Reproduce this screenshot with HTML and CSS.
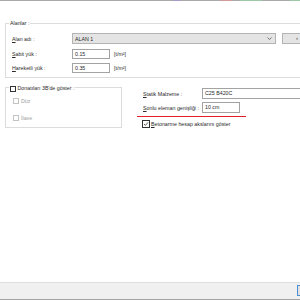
FILE: index.html
```html
<!DOCTYPE html>
<html lang="tr">
<head>
<meta charset="utf-8">
<link rel="stylesheet" href="styles.css">
</head>
<body>
<div class="window">
  <div class="topline">
    <span class="seg gray w173"></span><span class="seg purple w8"></span><span class="seg gray w39"></span><span class="seg red w12"></span><span class="seg gray w8"></span><span class="seg green w22"></span><span class="seg gray w28"></span><span class="seg green w10"></span>
  </div>
  <div class="content">
    <div class="group g1">
      <div class="group-title">Alanlar :</div>
      <div class="row r1">
        <span class="lbl"><u>A</u>lan adı :</span>
        <div class="combo"><span class="combo-text">ALAN 1</span>
          <svg class="chev" width="5" height="3" viewBox="0 0 5 3"><path d="M0.5 0.5 L2.5 2.5 L4.5 0.5" fill="none" stroke="#555" stroke-width="0.8"/></svg>
        </div>
        <div class="sidebtn">‹</div>
      </div>
      <div class="row r2">
        <span class="lbl"><u>S</u>abit yük :</span>
        <div class="input short">0.15</div>
        <span class="unit">[t/m²]</span>
      </div>
      <div class="row r3">
        <span class="lbl"><u>H</u>areketli yük :</span>
        <div class="input short">0.35</div>
        <span class="unit">[t/m²]</span>
      </div>
    </div>
    <div class="lower">
      <div class="group g2">
        <div class="group-title check-title"><span class="cb"></span>Donatıları 3B'de göster :</div>
        <div class="opt first"><span class="cb dis"></span>Düz</div>
        <div class="opt second"><span class="cb dis"></span>İlave</div>
      </div>
      <div class="right">
        <div class="row rs">
          <span class="lbl lbl2"><u>S</u>tatik Malzeme :</span>
          <div class="input wide">C25 B420C</div>
        </div>
        <div class="row rn">
          <span class="lbl lbl2"><u>S</u>onlu eleman genişliği :</span>
          <div class="input short">10 cm</div>
          <span class="redline"></span>
        </div>
        <div class="row rb">
          <span class="cb checked"><svg width="6" height="6" viewBox="0 0 6 6"><path d="M1 3 L2.4 4.4 L5 1.4" fill="none" stroke="#333" stroke-width="0.8"/></svg></span>
          <span class="cb-text"><u>B</u>etonarme hesap akslarını göster</span>
        </div>
      </div>
    </div>
  </div>
  <div class="footer">
    <div class="footbtn"></div>
  </div>
</div>
</body>
</html>
```
FILE: styles.css
```css
html, body {
  margin: 0;
  padding: 0;
  background: #ffffff;
}
body {
  font-family: "Liberation Sans", Arial, sans-serif;
  font-size: 5.3px;
  color: #2a2a2a;
}
.window {
  width: 300px;
  height: 300px;
  overflow: hidden;
  display: flex;
  flex-direction: column;
  background: #ffffff;
}
.topline {
  display: flex;
  height: 1px;
  flex: none;
}
.seg { height: 1px; flex: none; }
.gray { background: #a9a9a9; }
.purple { background: #a89ac8; }
.red { background: #d49a9a; }
.green { background: #9cc8a8; }
.w173 { width: 173px; }
.w8 { width: 8px; }
.w39 { width: 39px; }
.w12 { width: 12px; }
.w22 { width: 22px; }
.w28 { width: 28px; }
.w10 { width: 10px; }

.content {
  flex: 1;
  padding-top: 22px;
}
.group {
  position: relative;
  border: 1px solid #dcdcdc;
  box-sizing: border-box;
}
.g1 {
  margin-left: 5px;
  width: 310px;
  padding: 9px 0 4px 6px;
}
.group-title {
  position: absolute;
  top: -4px;
  left: 3px;
  height: 7px;
  line-height: 7px;
  padding: 0 1px;
  background: #ffffff;
  white-space: nowrap;
}
.row {
  display: flex;
  align-items: center;
  position: relative;
}
.r1 { height: 11px; }
.r2 { height: 10px; margin-top: 5px; }
.r3 { height: 10px; margin-top: 4px; }
.lbl {
  width: 60px;
  flex: none;
  white-space: nowrap;
}
.lbl2 { width: 59px; }
u { text-decoration-thickness: 0.5px; text-underline-offset: 0.5px; }
.combo {
  width: 204px;
  flex: none;
  height: 11px;
  box-sizing: border-box;
  border: 1px solid #b4b4b4;
  background: #e4e4e4;
  display: flex;
  align-items: center;
  justify-content: space-between;
  padding: 0 3px 0 2px;
}
.chev { display: block; }
.sidebtn {
  margin-left: 6px;
  width: 30px;
  flex: none;
  height: 11px;
  box-sizing: border-box;
  border: 1px solid #b4b4b4;
  background: #e4e4e4;
  line-height: 9px;
  padding-left: 13px;
  font-size: 6px;
  color: #333;
}
.input {
  height: 10px;
  flex: none;
  box-sizing: border-box;
  border: 1px solid #a3a3a3;
  background: #ffffff;
  padding-left: 2px;
  line-height: 8px;
  white-space: nowrap;
}
.short { width: 38px; }
.wide { width: 120px; height: 11px; line-height: 9px; }
.unit { margin-left: 4px; }

.lower {
  display: flex;
  align-items: flex-start;
}
.g2 {
  flex: none;
  margin-left: 5px;
  margin-top: 9px;
  width: 117px;
  height: 41px;
  padding: 9px 0 0 7px;
}
.check-title {
  top: -3px;
  left: 3px;
  display: flex;
  align-items: center;
  gap: 1.5px;
  padding: 0 1px;
}
.cb {
  width: 6px;
  height: 6px;
  box-sizing: border-box;
  border: 1px solid #333333;
  background: #ffffff;
  flex: none;
  display: block;
}
.cb.dis { border-color: #c4c4c4; }
.cb.checked {
  border: none;
  outline: 0.8px solid #333;
  outline-offset: -0.8px;
}
.cb.checked svg { display: block; }
.opt {
  display: flex;
  align-items: center;
  gap: 2px;
  height: 7px;
  color: #a0a0a0;
}
.opt.second { margin-top: 10px; }

.right {
  margin-left: 21px;
  margin-top: 10px;
  flex: 1;
  min-width: 0;
}
.rs { height: 11px; }
.rn { height: 11px; margin-top: 3px; }
.rn .input { height: 11px; line-height: 9px; }
.rb { height: 6px; margin-top: 8px; gap: 2px; }
.cb-text { white-space: nowrap; }
.redline {
  position: absolute;
  left: -6px;
  top: 13.5px;
  width: 109px;
  height: 1.6px;
  background: #e41e26;
}

.footer {
  flex: none;
  height: 18px;
  box-sizing: border-box;
  border-top: 1px solid #dedede;
  border-bottom: 1px solid #a3a3a3;
  background: #f0f0f0;
  display: flex;
  justify-content: flex-end;
  padding-top: 2px;
}
.footbtn {
  width: 14px;
  height: 11px;
  flex: none;
  margin-right: -11px;
  box-sizing: border-box;
  border: 1px solid #4a90d9;
  background: #e1e1e1;
}
```
